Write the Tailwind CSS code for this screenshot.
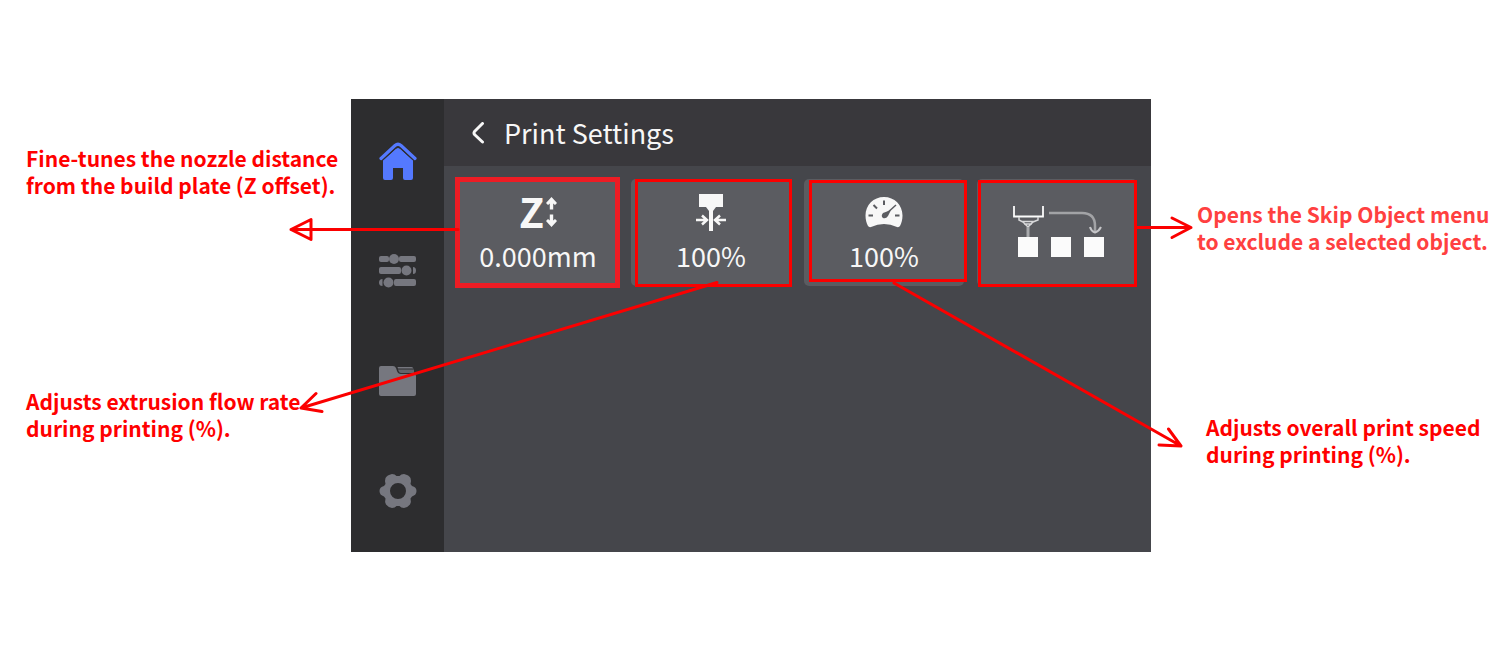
<!DOCTYPE html>
<html lang="en">
<head>
    <meta charset="UTF-8">
    <meta name="viewport" content="width=device-width, initial-scale=1.0">
    <title>Print Settings</title>
    <script src="https://cdn.jsdelivr.net/npm/@tailwindcss/browser@4"></script>
</head>
<body class="min-h-screen bg-white font-['Noto_Sans_CJK_SC','Noto_Sans',sans-serif]">
    <div class="relative grid grid-cols-[351fr_800fr_350fr] items-start pt-[99px] pb-[99px]">

        <!-- left notes -->
        <div class="flex min-w-0 flex-col gap-[189px] pt-[46px] pl-[26px] text-[21px] leading-[27px] font-bold text-[#ff0000] whitespace-nowrap">
            <p>Fine-tunes the nozzle distance<br>from the build plate (Z offset).</p>
            <p>Adjusts extrusion flow rate<br>during printing (%).</p>
        </div>

        <!-- printer screen -->
        <div class="flex min-h-[453px] min-w-0 bg-[#45464b]">
            <nav class="flex w-[93px] shrink-0 flex-col items-center gap-[72px] bg-[#2d2d2f] pt-[43px] text-[#76777f]">
                <a href="#" aria-label="Home" class="text-[#5479ff]">
                    <svg class="size-[38px]" viewBox="0 0 38 38" fill="currentColor">
                        <path d="M2 16.5 L16 3.5 Q19 1 22 3.5 L36 16.5" fill="none" stroke="currentColor" stroke-width="3.2" stroke-linecap="round"/>
                        <path d="M4 18.5 L17 6.8 Q19 5.2 21 6.8 L34 18.5 V36 Q34 38 32 38 H26 Q24 38 24 36 V26 H14 V36 Q14 38 12 38 H6 Q4 38 4 36 Z"/>
                        <path d="M4.5 17.5 L17 6 Q19 4.3 21 6 L33.500 17.5" fill="none" stroke="#2d2d2f" stroke-width="1"/>
                    </svg>
                </a>
                <a href="#" aria-label="Controls">
                    <svg class="size-[38px]" viewBox="0 0 38 38" fill="currentColor">
                        <rect x="0" y="4" width="10" height="6" rx="2"/>
                        <circle cx="15" cy="7" r="5"/>
                        <rect x="20" y="4" width="17" height="6" rx="2"/>
                        <rect x="0" y="15" width="22" height="7" rx="2"/>
                        <circle cx="27.500" cy="18.500" r="5"/>
                        <path d="M34 15 Q37 15 37 18.500 Q37 22 34 22 Z"/>
                        <path d="M3.500 27 Q0 27 0 30.500 Q0 34 3.500 34 Z"/>
                        <circle cx="9.500" cy="30.500" r="5"/>
                        <rect x="15" y="27" width="22" height="7" rx="2"/>
                    </svg>
                </a>
                <a href="#" aria-label="Files">
                    <svg class="size-[38px]" viewBox="0 0 38 38" fill="currentColor">
                        <path d="M2 4 H14 Q16 4 17 6 L18 9 Q19 12 22 12 H35 Q37 12 37 14 V32 Q37 34 35 34 H2 Q0 34 0 32 V6 Q0 4 2 4 Z"/>
                        <path d="M18.500 5 H32.500 Q34 5 34.500 6.500 H19 Z"/>
                        <path d="M19 7.500 H35 V11 H22 Q20 11 19 7.500 Z" opacity=".75"/>
                    </svg>
                </a>
                <a href="#" aria-label="Settings">
                    <svg class="size-[38px]" viewBox="0 0 38 38" fill="currentColor">
                        <path fill-rule="evenodd" d="M13 2 Q16 2 17.500 4 H20.500 Q22 2 25 2 Q30 3 31.500 6 Q32.500 9 31.500 12 L33 14 Q37.500 15 37.500 19 Q37.500 23 33 24.500 L31.500 26.500 Q32.500 30 31 32.500 Q28 36 25 36 Q22 36 20.500 34 H17.500 Q16 36 13 36 Q10 36 7 32.500 Q5.500 30 6.500 26.500 L5 24.500 Q.5 23 .5 19 Q.5 15 5 14 L6.500 12 Q5.500 9 6.500 6 Q8 3 13 2 Z M19 11 A8 8 0 1 0 19 27 A8 8 0 1 0 19 11 Z"/>
                    </svg>
                </a>
            </nav>

            <main class="min-w-0 flex-1 text-[#f7f7f7]">
                <header class="flex h-[67px] items-center gap-[19px] bg-[#39383c] pl-[27px]">
                    <button type="button" aria-label="Back">
                        <svg class="h-[22px] w-[14px]" viewBox="0 0 14 22" fill="none" stroke="currentColor" stroke-width="3" stroke-linecap="round" stroke-linejoin="round">
                            <path d="M11.500 1.500 L3.500 9.500 Q2.500 11 3.500 12.500 L11.500 20"/>
                        </svg>
                    </button>
                    <h1 class="text-[27px] leading-[36px]">Print Settings</h1>
                </header>

                <div class="grid grid-cols-4 gap-[13px] px-[14px] pt-[13px]">
                    <button type="button" class="flex h-[107px] flex-col items-center gap-[7px] rounded-[5px] bg-[#5b5c61] pt-[14px]">
                        <span class="flex h-[38px] items-center gap-[2px]">
                            <span class="pb-1 text-[41px] leading-[38px] font-bold">Z</span>
                            <svg class="h-[30px] w-[11px]" viewBox="0 0 11 30" fill="currentColor">
                                <path d="M5.500 0 L11 6 L9 8 L7.200 6.500 V12.500 H3.800 V6.500 L2 8 L0 6 Z"/>
                                <path d="M5.500 30 L11 24 L9 22 L7.200 23.500 V17.500 H3.800 V23.500 L2 22 L0 24 Z"/>
                            </svg>
                        </span>
                        <span class="text-[27px] leading-[36px]">0.000mm</span>
                    </button>

                    <button type="button" class="flex h-[107px] flex-col items-center gap-[7px] rounded-[5px] bg-[#5b5c61] pt-[14px]">
                        <svg class="h-[38px] w-[30px]" viewBox="0 0 30 38" fill="currentColor">
                            <path d="M3 1 H27 V14 H20 L17 18 V38 H13 V18 L10 14 H3 Z"/>
                            <path d="M0 27 H10 M6 22.500 L11 27 L6 31.500 M30 27 H20 M24 22.500 L19 27 L24 31.500" fill="none" stroke="currentColor" stroke-width="2.500"/>
                        </svg>
                        <span class="text-[27px] leading-[36px]">100%</span>
                    </button>

                    <button type="button" class="flex h-[107px] flex-col items-center gap-[7px] rounded-[5px] bg-[#5b5c61] pt-[14px]">
                        <svg class="size-[38px]" viewBox="0 0 38 38" fill="currentColor">
                            <path d="M19 4 C8.500 4 .5 12 .5 22.500 C.5 27 1.500 30 3 33 Q4 34.500 6 34 Q19 28 32 34 Q34 34.500 35 33 C36.500 30 37.500 27 37.500 22.500 C37.500 12 29.500 4 19 4 Z"/>
                            <g stroke="#5b5c61" fill="none" stroke-width="2">
                                <path d="M19 7.500 V12 M3.500 22.500 H8 M30 22.500 H34.500 M8.500 12 L12 15.500"/>
                                <path d="M31 12 L21 21" stroke-width="1.500"/>
                            </g>
                            <path d="M26 17 L23 23 Q21 26 18 25 Q15.500 23 18 20 Z" fill="#5b5c61"/>
                        </svg>
                        <span class="text-[27px] leading-[36px]">100%</span>
                    </button>

                    <button type="button" aria-label="Skip object" class="flex h-[107px] items-center justify-center rounded-[5px] bg-[#5b5c61] pb-[2px] pl-[4px]">
                        <svg class="h-[52px] w-[92px]" viewBox="0 0 92 52" fill="none" stroke="#fbfbfb">
                            <path d="M1 0 V10.500 H30 V0" stroke-width="1.800"/>
                            <path d="M6 11 V14 L10 16 L15 21 L20 16 L25 14 V11 M9 15.500 H22 M11 18 H19" stroke="#d8d8da" stroke-width="1.500"/>
                            <path d="M15 21 V32" stroke="#a9aaad" stroke-width="3"/>
                            <path d="M36 7 H69 Q82 7 82 20 V25" stroke="#a2a3a6" stroke-width="2.500"/>
                            <path d="M77 21 Q78 25 82 26.500 Q86 25 88 21" stroke="#c6c6c9" stroke-width="2"/>
                            <path d="M5 31 H25 V51 H5 Z M38 31 H58 V51 H38 Z M71 31 H91 V51 H71 Z" fill="#fbfbfb" stroke="none"/>
                        </svg>
                    </button>
                </div>
            </main>
        </div>

        <!-- right notes -->
        <div class="flex min-w-0 flex-col gap-[159px] pt-[102px] pl-[46px] text-[21px] leading-[27px] font-bold whitespace-nowrap">
            <p class="text-[#ff4040]">Opens the Skip Object menu<br>to exclude a selected object.</p>
            <p class="pl-[9px] text-[#ff0000]">Adjusts overall print speed<br>during printing (%).</p>
        </div>

        <!-- frames and arrows drawn over the screen -->
        <svg class="pointer-events-none absolute inset-0 h-full w-full" viewBox="0 0 1501 651" preserveAspectRatio="none" fill="none" stroke="#fb0000" stroke-width="3">
            <rect x="457.500" y="179.500" width="160" height="106" stroke="#ed1c24" stroke-width="5"/>
            <rect x="636.500" y="180.500" width="154" height="105"/>
            <rect x="810.500" y="181.500" width="155" height="99"/>
            <rect x="979.500" y="181.500" width="156" height="104"/>
            <g stroke-linecap="round" stroke-linejoin="round">
                <path d="M458 229.500 H291 L311 219.500 V239.500 L291 229.500"/>
                <path d="M717 282.500 L301 408 M316 393.500 L301 408 L322 411.500"/>
                <path d="M894 283 L1181 446 M1168.500 429 L1181 446 L1159 445"/>
                <path d="M1137 227.500 H1191 M1172 218 L1191 227.500 L1172 237.500"/>
            </g>
        </svg>
    </div>
</body>
</html>
